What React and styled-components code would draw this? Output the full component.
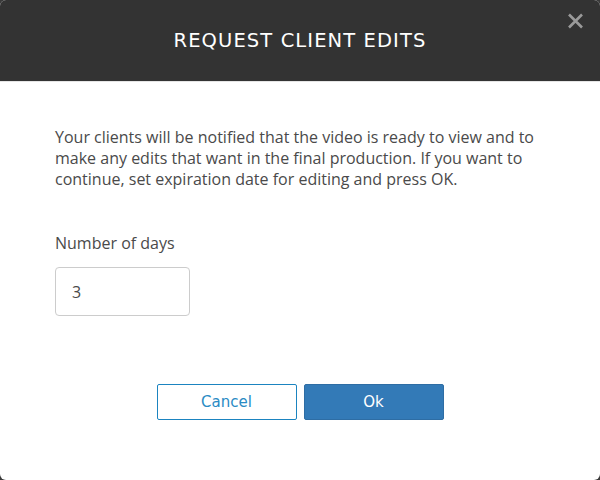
import styled, { createGlobalStyle } from 'styled-components';

const GlobalStyle = createGlobalStyle`
  html, body {
    margin: 0;
    padding: 0;
    background: #3a3a3a;
  }
  * { box-sizing: border-box; }
`;

const Modal = styled.div`
  width: 600px;
  height: 480px;
  background: #ffffff;
  border-radius: 6px;
  overflow: hidden;
  display: flex;
  flex-direction: column;
  position: relative;
`;

const Header = styled.header`
  height: 82px;
  background: #333333;
  display: flex;
  align-items: center;
  justify-content: center;
  border-bottom: 1px solid #e5e5e5;
`;

const Title = styled.h2`
  margin: 0;
  color: #ffffff;
  font-family: 'DejaVu Sans', 'Noto Sans', sans-serif;
  font-size: 19.5px;
  font-weight: 500;
  letter-spacing: 1.1px;
`;

const CloseButton = styled.button`
  position: absolute;
  top: 12px;
  right: 14px;
  width: 20px;
  height: 20px;
  padding: 0;
  border: none;
  background: none;
  cursor: pointer;
`;

const Body = styled.div`
  padding: 45px 55px 0;
  font-family: 'Open Sans', sans-serif;
  color: #4a4a4a;
  font-size: 16px;
`;

const Intro = styled.p`
  margin: 0;
  line-height: 21px;
`;

const Label = styled.label`
  display: block;
  margin-top: 43px;
  line-height: 21px;
`;

const DaysInput = styled.input`
  display: block;
  margin-top: 13px;
  width: 135px;
  height: 49px;
  padding: 0 16px;
  border: 1px solid #cccccc;
  border-radius: 4px;
  font-family: 'Open Sans', sans-serif;
  font-size: 16px;
  color: #4a4a4a;
  outline: none;
`;

const Actions = styled.div`
  display: flex;
  justify-content: center;
  gap: 7px;
  margin-top: 68px;
`;

const Button = styled.button`
  width: 140px;
  height: 36px;
  border-radius: 2px;
  font-family: 'DejaVu Sans', 'Noto Sans', sans-serif;
  font-size: 15px;
  cursor: pointer;
  border: 1px solid ${(p) => (p.primary ? '#2e6da4' : '#1b84c0')};
  background: ${(p) => (p.primary ? '#337ab7' : '#ffffff')};
  color: ${(p) => (p.primary ? '#ffffff' : '#2a8bc4')};
`;

export default function App() {
  return (
    <>
      <GlobalStyle />
      <Modal>
        <Header>
          <Title>REQUEST CLIENT EDITS</Title>
        </Header>
        <CloseButton aria-label='close'>
          <svg width='20' height='20' viewBox='0 0 20 20'>
            <path
              d='M3 2.5 L16 15.5 M16 2.5 L3 15.5'
              stroke='#9a9a9a'
              strokeWidth='2.6'
            />
          </svg>
        </CloseButton>
        <Body>
          <Intro>
            Your clients will be notified that the video is ready to view and to
            make any edits that want in the final production. If you want to
            continue, set expiration date for editing and press OK.
          </Intro>
          <Label htmlFor='days'>Number of days</Label>
          <DaysInput id='days' type='text' defaultValue='3' />
          <Actions>
            <Button type='button'>Cancel</Button>
            <Button type='button' primary>
              Ok
            </Button>
          </Actions>
        </Body>
      </Modal>
    </>
  );
}
